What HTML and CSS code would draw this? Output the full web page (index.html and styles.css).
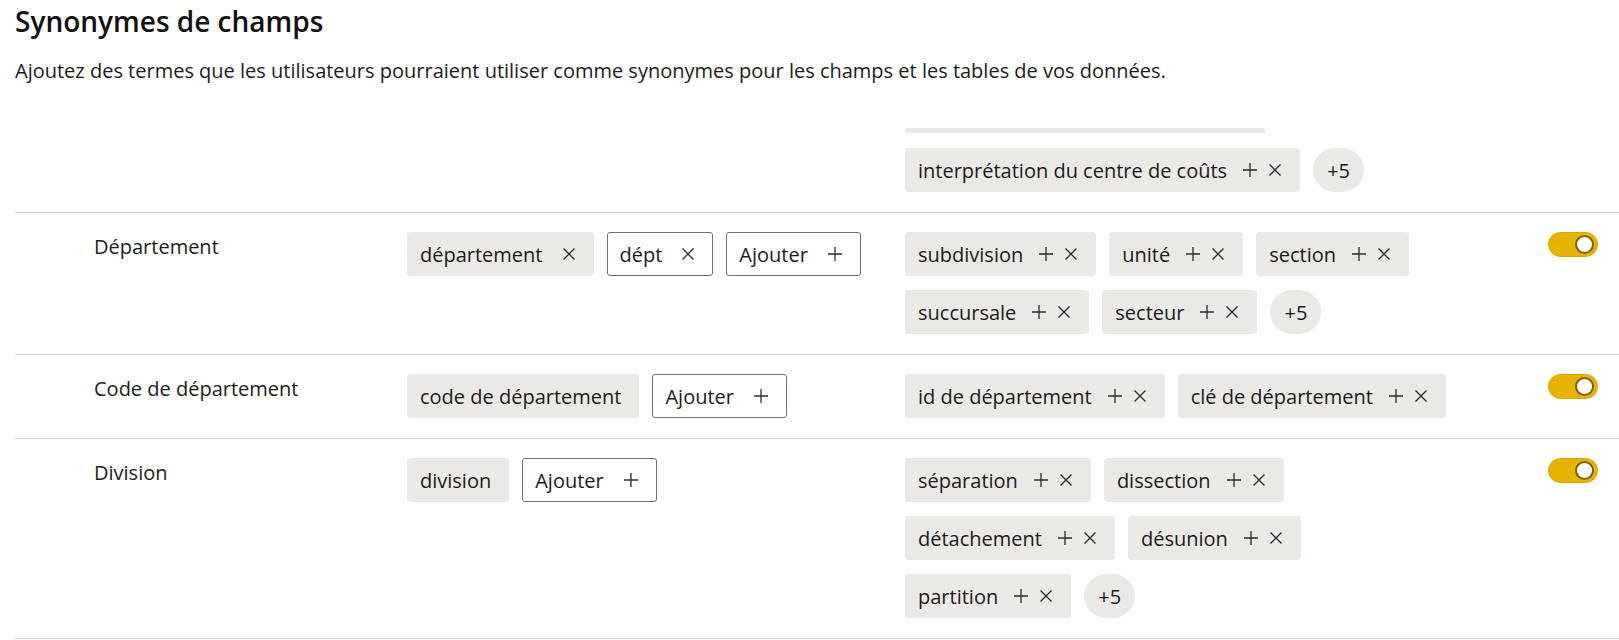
FILE: index.html
```html
<!DOCTYPE html>
<html lang="fr">
<head>
<meta charset="utf-8">
<title>Synonymes de champs</title>
<link rel="stylesheet" href="styles.css">
</head>
<body>
<div class="page">
  <h1 class="title">Synonymes de champs</h1>
  <p class="subtitle">Ajoutez des termes que les utilisateurs pourraient utiliser comme synonymes pour les champs et les tables de vos données.</p>

  <div class="table">
    <div class="row row-partial">
      <div class="cell-label"></div>
      <div class="cell-own"></div>
      <div class="cell-sugg">
        <div class="scroll-bar"></div>
        <div class="line">
          <span class="chip">interprétation du centre de coûts<svg class="ic-plus" viewBox="0 0 16 16"><path d="M8 1V15M1 8H15"/></svg><svg class="ic-x" viewBox="0 0 14 14"><path d="M1.5 1.5L12.5 12.5M12.5 1.5L1.5 12.5"/></svg></span>
          <span class="count">+5</span>
        </div>
      </div>
      <div class="cell-toggle"></div>
    </div>

    <div class="row">
      <div class="cell-label">Département</div>
      <div class="cell-own">
        <div class="line">
          <span class="chip">département<svg class="ic-x solo" viewBox="0 0 14 14"><path d="M1.5 1.5L12.5 12.5M12.5 1.5L1.5 12.5"/></svg></span>
          <span class="chip outline">dépt<svg class="ic-x solo" viewBox="0 0 14 14"><path d="M1.5 1.5L12.5 12.5M12.5 1.5L1.5 12.5"/></svg></span>
          <span class="chip outline">Ajouter<svg class="ic-plus solo" viewBox="0 0 16 16"><path d="M8 1V15M1 8H15"/></svg></span>
        </div>
      </div>
      <div class="cell-sugg">
        <div class="line">
          <span class="chip">subdivision<svg class="ic-plus" viewBox="0 0 16 16"><path d="M8 1V15M1 8H15"/></svg><svg class="ic-x" viewBox="0 0 14 14"><path d="M1.5 1.5L12.5 12.5M12.5 1.5L1.5 12.5"/></svg></span>
          <span class="chip">unité<svg class="ic-plus" viewBox="0 0 16 16"><path d="M8 1V15M1 8H15"/></svg><svg class="ic-x" viewBox="0 0 14 14"><path d="M1.5 1.5L12.5 12.5M12.5 1.5L1.5 12.5"/></svg></span>
          <span class="chip">section<svg class="ic-plus" viewBox="0 0 16 16"><path d="M8 1V15M1 8H15"/></svg><svg class="ic-x" viewBox="0 0 14 14"><path d="M1.5 1.5L12.5 12.5M12.5 1.5L1.5 12.5"/></svg></span>
        </div>
        <div class="line">
          <span class="chip">succursale<svg class="ic-plus" viewBox="0 0 16 16"><path d="M8 1V15M1 8H15"/></svg><svg class="ic-x" viewBox="0 0 14 14"><path d="M1.5 1.5L12.5 12.5M12.5 1.5L1.5 12.5"/></svg></span>
          <span class="chip">secteur<svg class="ic-plus" viewBox="0 0 16 16"><path d="M8 1V15M1 8H15"/></svg><svg class="ic-x" viewBox="0 0 14 14"><path d="M1.5 1.5L12.5 12.5M12.5 1.5L1.5 12.5"/></svg></span>
          <span class="count">+5</span>
        </div>
      </div>
      <div class="cell-toggle"><span class="toggle"><span class="knob"></span></span></div>
    </div>

    <div class="row">
      <div class="cell-label">Code de département</div>
      <div class="cell-own">
        <div class="line">
          <span class="chip">code de département</span>
          <span class="chip outline">Ajouter<svg class="ic-plus solo" viewBox="0 0 16 16"><path d="M8 1V15M1 8H15"/></svg></span>
        </div>
      </div>
      <div class="cell-sugg">
        <div class="line">
          <span class="chip">id de département<svg class="ic-plus" viewBox="0 0 16 16"><path d="M8 1V15M1 8H15"/></svg><svg class="ic-x" viewBox="0 0 14 14"><path d="M1.5 1.5L12.5 12.5M12.5 1.5L1.5 12.5"/></svg></span>
          <span class="chip">clé de département<svg class="ic-plus" viewBox="0 0 16 16"><path d="M8 1V15M1 8H15"/></svg><svg class="ic-x" viewBox="0 0 14 14"><path d="M1.5 1.5L12.5 12.5M12.5 1.5L1.5 12.5"/></svg></span>
        </div>
      </div>
      <div class="cell-toggle"><span class="toggle"><span class="knob"></span></span></div>
    </div>

    <div class="row">
      <div class="cell-label">Division</div>
      <div class="cell-own">
        <div class="line">
          <span class="chip">division</span>
          <span class="chip outline">Ajouter<svg class="ic-plus solo" viewBox="0 0 16 16"><path d="M8 1V15M1 8H15"/></svg></span>
        </div>
      </div>
      <div class="cell-sugg">
        <div class="line">
          <span class="chip">séparation<svg class="ic-plus" viewBox="0 0 16 16"><path d="M8 1V15M1 8H15"/></svg><svg class="ic-x" viewBox="0 0 14 14"><path d="M1.5 1.5L12.5 12.5M12.5 1.5L1.5 12.5"/></svg></span>
          <span class="chip">dissection<svg class="ic-plus" viewBox="0 0 16 16"><path d="M8 1V15M1 8H15"/></svg><svg class="ic-x" viewBox="0 0 14 14"><path d="M1.5 1.5L12.5 12.5M12.5 1.5L1.5 12.5"/></svg></span>
        </div>
        <div class="line">
          <span class="chip">détachement<svg class="ic-plus" viewBox="0 0 16 16"><path d="M8 1V15M1 8H15"/></svg><svg class="ic-x" viewBox="0 0 14 14"><path d="M1.5 1.5L12.5 12.5M12.5 1.5L1.5 12.5"/></svg></span>
          <span class="chip">désunion<svg class="ic-plus" viewBox="0 0 16 16"><path d="M8 1V15M1 8H15"/></svg><svg class="ic-x" viewBox="0 0 14 14"><path d="M1.5 1.5L12.5 12.5M12.5 1.5L1.5 12.5"/></svg></span>
        </div>
        <div class="line">
          <span class="chip">partition<svg class="ic-plus" viewBox="0 0 16 16"><path d="M8 1V15M1 8H15"/></svg><svg class="ic-x" viewBox="0 0 14 14"><path d="M1.5 1.5L12.5 12.5M12.5 1.5L1.5 12.5"/></svg></span>
          <span class="count">+5</span>
        </div>
      </div>
      <div class="cell-toggle"><span class="toggle"><span class="knob"></span></span></div>
    </div>
  </div>
</div>
</body>
</html>
```

FILE: styles.css
```css
* { box-sizing: border-box; }

html, body {
  margin: 0;
  padding: 0;
  background: #ffffff;
}

body {
  font-family: "Open Sans", "Noto Sans", "Liberation Sans", sans-serif;
  color: #1b1b1b;
}

.page {
  padding-left: 15px;
}

.title {
  margin: 0;
  padding-top: 3px;
  font-size: 28px;
  line-height: 36px;
  font-weight: 600;
  color: #111;
}

.subtitle {
  margin: 19px 0 0;
  font-size: 20px;
  line-height: 26px;
  color: #1b1b1b;
}

.table {
  display: flex;
  flex-direction: column;
}

.row {
  display: grid;
  grid-template-columns: 392px 498px 1fr 71px;
  padding: 19px 0 20px;
  border-bottom: 1px solid #cfcfcf;
}

.row-partial {
  padding-top: 44px;
}

.cell-label {
  padding-left: 79px;
  padding-top: 2px;
  font-size: 20px;
  line-height: 26px;
}

.cell-own,
.cell-sugg {
  display: flex;
  flex-direction: column;
  gap: 14px;
}

.scroll-bar {
  width: 360px;
  height: 5px;
  border-radius: 3px;
  background: #e9e7e4;
  margin-bottom: 1px;
}

.line {
  display: flex;
  gap: 13px;
}

.chip {
  display: inline-flex;
  align-items: center;
  height: 44px;
  padding: 0 18px 0 13px;
  background: #ebe9e6;
  border-radius: 4px;
  font-size: 20px;
  white-space: nowrap;
  color: #1b1b1b;
}

.chip.outline {
  background: #ffffff;
  border: 1px solid #707070;
  border-radius: 3px;
  padding-left: 12px;
  padding-right: 17px;
}

.chip svg {
  fill: none;
  stroke: #2b2b2b;
  stroke-width: 1.3;
  flex: none;
}

.ic-plus {
  width: 16px;
  height: 16px;
  margin-left: 15px;
}

.ic-x {
  width: 14px;
  height: 14px;
  margin-left: 10px;
}

.ic-x.solo,
.ic-plus.solo {
  margin-left: 19px;
}

.count {
  display: inline-flex;
  align-items: center;
  justify-content: center;
  width: 51px;
  height: 44px;
  border-radius: 22px;
  background: #ebe9e6;
  font-size: 20px;
  color: #1b1b1b;
}

.cell-toggle {
  padding-top: 0;
}

.toggle {
  display: flex;
  align-items: center;
  justify-content: flex-end;
  width: 50px;
  height: 25px;
  padding-right: 3px;
  border-radius: 13px;
  background: #e8b200;
  border: 1px solid #d9a500;
}

.knob {
  width: 19px;
  height: 19px;
  border-radius: 50%;
  background: #ffffff;
  border: 2px solid #7d6300;
}
```
